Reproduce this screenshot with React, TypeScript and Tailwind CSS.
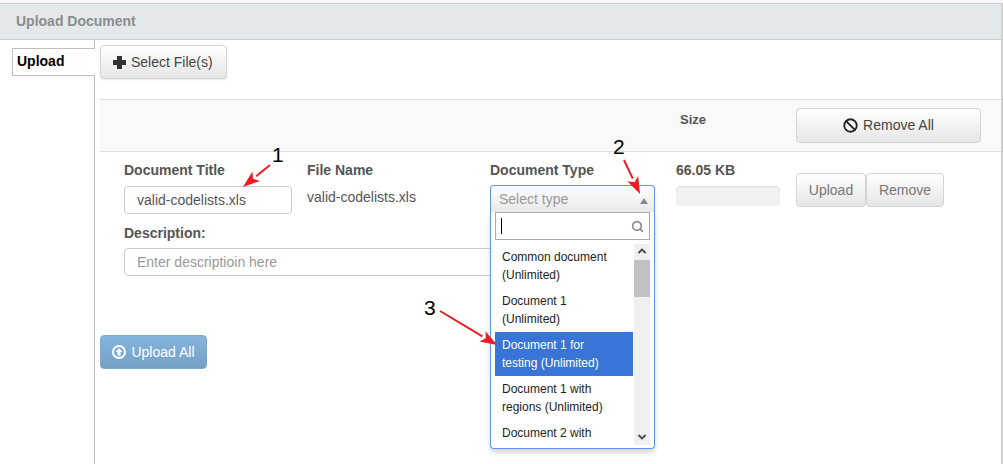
import { Ban, ChevronDown, ChevronUp, Search } from "lucide-react"

const options = [
    { lines: ["Common document", "(Unlimited)"] },
    { lines: ["Document 1", "(Unlimited)"] },
    { lines: ["Document 1 for", "testing (Unlimited)"], active: true },
    { lines: ["Document 1 with", "regions (Unlimited)"] },
    { lines: ["Document 2 with"] },
]

const grayBtn = "rounded border border-[#d4d4d4] bg-gradient-to-b from-[#ffffff] to-[#e6e6e6] text-[14px]"

function Arrow({ x1, y1, x2, y2 }: { x1: number; y1: number; x2: number; y2: number }) {
    const a = Math.atan2(y2 - y1, x2 - x1)
    const len = 17
    const wing = 6
    const bx = x2 - Math.cos(a) * len
    const by = y2 - Math.sin(a) * len
    const nx = -Math.sin(a) * wing
    const ny = Math.cos(a) * wing
    return (
        <>
            <line x1={x1} y1={y1} x2={bx} y2={by} stroke="#ed1c24" strokeWidth="2" />
            <polygon
                points={`${x2},${y2} ${bx + nx},${by + ny} ${bx + Math.cos(a) * 4},${by + Math.sin(a) * 4} ${bx - nx},${by - ny}`}
                fill="#ed1c24"
            />
        </>
    )
}

function DocumentTypeSelect() {
    return (
        <div className="absolute left-[490px] top-[185px] z-10 w-[165px]">
            <div className="flex h-[27px] items-center justify-between rounded-t border border-b-0 border-[#5897fb] bg-gradient-to-b from-[#ffffff] to-[#e8e8e8] pl-[8px] pr-[6px] text-[14px] text-[#999999]">
                <span>Select type</span>
                <span className="mt-[3px] h-0 w-0 border-x-[4px] border-b-[6px] border-x-transparent border-b-[#888888]" />
            </div>
            <div className="h-[237px] rounded-b border border-t-0 border-[#5897fb] bg-white shadow-[0_4px_5px_rgba(0,0,0,0.15)]">
                <div className="px-[4px]">
                    <div className="flex h-[28px] items-center justify-between border border-[#aaaaaa] pl-[5px] pr-[5px]">
                        <span className="h-[16px] w-px bg-black" />
                        <Search className="h-[13px] w-[13px] text-[#888888]" strokeWidth={3} />
                    </div>
                </div>
                <div className="mt-[4px] flex h-[201px] overflow-hidden pl-[4px] pr-[4px]">
                    <ul className="w-[138px] overflow-hidden text-[12px] leading-[18px] text-[#222222]">
                        {options.map((o) => (
                            <li
                                key={o.lines[0]}
                                className={o.active ? "bg-[#3875d7] py-[4px] pl-[7px] text-white" : "py-[4px] pl-[7px]"}
                            >
                                {o.lines.map((l) => (
                                    <div key={l} className="whitespace-nowrap">{l}</div>
                                ))}
                            </li>
                        ))}
                    </ul>
                    <div className="ml-[1px] flex w-[16px] flex-col items-center justify-between bg-[#f0f0f0]">
                        <div className="relative w-full flex-1">
                            <ChevronUp className="mx-auto mt-[1px] h-[12px] w-[12px] text-[#505050]" strokeWidth={4} />
                            <div className="mt-[3px] h-[37px] w-full bg-[#c1c1c1]" />
                        </div>
                        <ChevronDown className="mb-[2px] h-[12px] w-[12px] text-[#505050]" strokeWidth={4} />
                    </div>
                </div>
            </div>
        </div>
    )
}

export default function App() {
    return (
        <div className="relative h-[464px] w-[1003px] overflow-hidden bg-white font-['Liberation_Sans',sans-serif] text-[14px] text-[#555555]">
            {/* top edge */}
            <div className="h-[4px] border-b border-[#cccccc] bg-[#f6f6f6]" />

            {/* header */}
            <div className="flex h-[36px] items-center border-b border-[#c8cfd0] bg-[#e3e9ea] pl-[16px] text-[14px] font-bold text-[#8c8c8c]">
                Upload Document
            </div>

            <div className="flex h-[424px]">
                {/* tabs */}
                <div className="w-[95px] shrink-0 border-r border-[#bfbfbf] pl-[12px] pt-[8px]">
                    <div className="-mr-px h-[28px] border border-r-0 border-[#bfbfbf] bg-white pl-[4px] text-[14px] font-bold leading-[25px] text-black">
                        Upload
                    </div>
                </div>

                {/* content */}
                <div className="min-w-0 flex-1 pl-[5px]">
                    <div className="h-[59px] pt-[5px]">
                        <button className={`${grayBtn} flex h-[34px] w-[127px] items-center gap-[5px] pl-[12px] text-[#444444] shadow-[0_1px_2px_rgba(0,0,0,0.1)]`}>
                            <span className="relative h-[13px] w-[13px] shrink-0">
                                <span className="absolute left-[4px] top-0 h-[13px] w-[5px] bg-[#333333]" />
                                <span className="absolute left-0 top-[4px] h-[5px] w-[13px] bg-[#333333]" />
                            </span>
                            Select File(s)
                        </button>
                    </div>

                    {/* table head */}
                    <div className="flex h-[53px] border-y border-[#dddddd] bg-[#f9f9f9]">
                        <div className="w-[580px] pt-[10px] pl-[580px] text-[13px] font-bold whitespace-nowrap">Size</div>
                        <div className="ml-[116px] pt-[8px]">
                            <button className={`${grayBtn} flex h-[35px] w-[185px] items-center justify-center gap-[5px] text-[#444444]`}>
                                <Ban className="h-[15px] w-[15px] text-[#222222]" strokeWidth={3} />
                                Remove All
                            </button>
                        </div>
                    </div>

                    {/* file row */}
                    <div className="flex pl-[24px] pt-[9px]">
                        <div className="w-[183px]">
                            <div className="text-[14px] leading-[18px] font-bold">Document Title</div>
                            <div className="mt-[7px] flex h-[28px] w-[168px] items-center rounded border border-[#cccccc] pl-[12px] text-[#555555]">
                                valid-codelists.xls
                            </div>
                            <div className="mt-[10px] text-[14px] leading-[18px] font-bold">Description:</div>
                            <div className="mt-[6px] flex h-[28px] w-[370px] items-center rounded border border-[#cccccc] pl-[12px] text-[#999999]">
                                Enter descriptioin here
                            </div>
                        </div>
                        <div className="w-[183px]">
                            <div className="text-[14px] leading-[18px] font-bold">File Name</div>
                            <div className="mt-[8px] leading-[20px]">valid-codelists.xls</div>
                        </div>
                        <div className="w-[186px] text-[14px] leading-[18px] font-bold">Document Type</div>
                        <div className="w-[120px]">
                            <div className="text-[14px] leading-[18px] font-bold">66.05 KB</div>
                            <div className="mt-[7px] h-[20px] w-[104px] rounded bg-[#f1f1f1] shadow-[inset_0_1px_2px_rgba(0,0,0,0.08)]" />
                        </div>
                        <div className="flex pt-[12px]">
                            <button className={`${grayBtn} h-[34px] w-[70px] text-[#777777]`}>Upload</button>
                            <button className={`${grayBtn} h-[34px] w-[78px] text-[#777777]`}>Remove</button>
                        </div>
                    </div>

                    {/* footer action */}
                    <div className="pt-[59px]">
                        <button className="flex h-[34px] w-[107px] items-center justify-center gap-[5px] rounded border border-[#7fa9cd] bg-gradient-to-b from-[#84b4dc] to-[#76a0c6] text-white">
                            <svg viewBox="0 0 14 14" className="h-[14px] w-[14px]">
                                <circle cx="7" cy="7" r="6" fill="none" stroke="white" strokeWidth="2" />
                                <path d="M7 3 L10.5 7 H8.5 V10.5 H5.5 V7 H3.5 Z" fill="white" />
                            </svg>
                            Upload All
                        </button>
                    </div>
                </div>
            </div>

            <div className="absolute right-0 top-[4px] h-[460px] w-[2px] bg-[#d0d0d0]" />

            <DocumentTypeSelect />

            {/* annotations */}
            <span className="absolute left-[272px] top-[143px] text-[21px] leading-[24px] text-black">1</span>
            <span className="absolute left-[613px] top-[135px] text-[21px] leading-[24px] text-black">2</span>
            <span className="absolute left-[424px] top-[296px] text-[21px] leading-[24px] text-black">3</span>
            <svg className="pointer-events-none absolute left-0 top-0 z-20" width="1003" height="464">
                <Arrow x1={270} y1={165} x2={243} y2={187} />
                <Arrow x1={624} y1={160} x2={640} y2={194} />
                <Arrow x1={440} y1={311} x2={497} y2={345} />
            </svg>
        </div>
    )
}
